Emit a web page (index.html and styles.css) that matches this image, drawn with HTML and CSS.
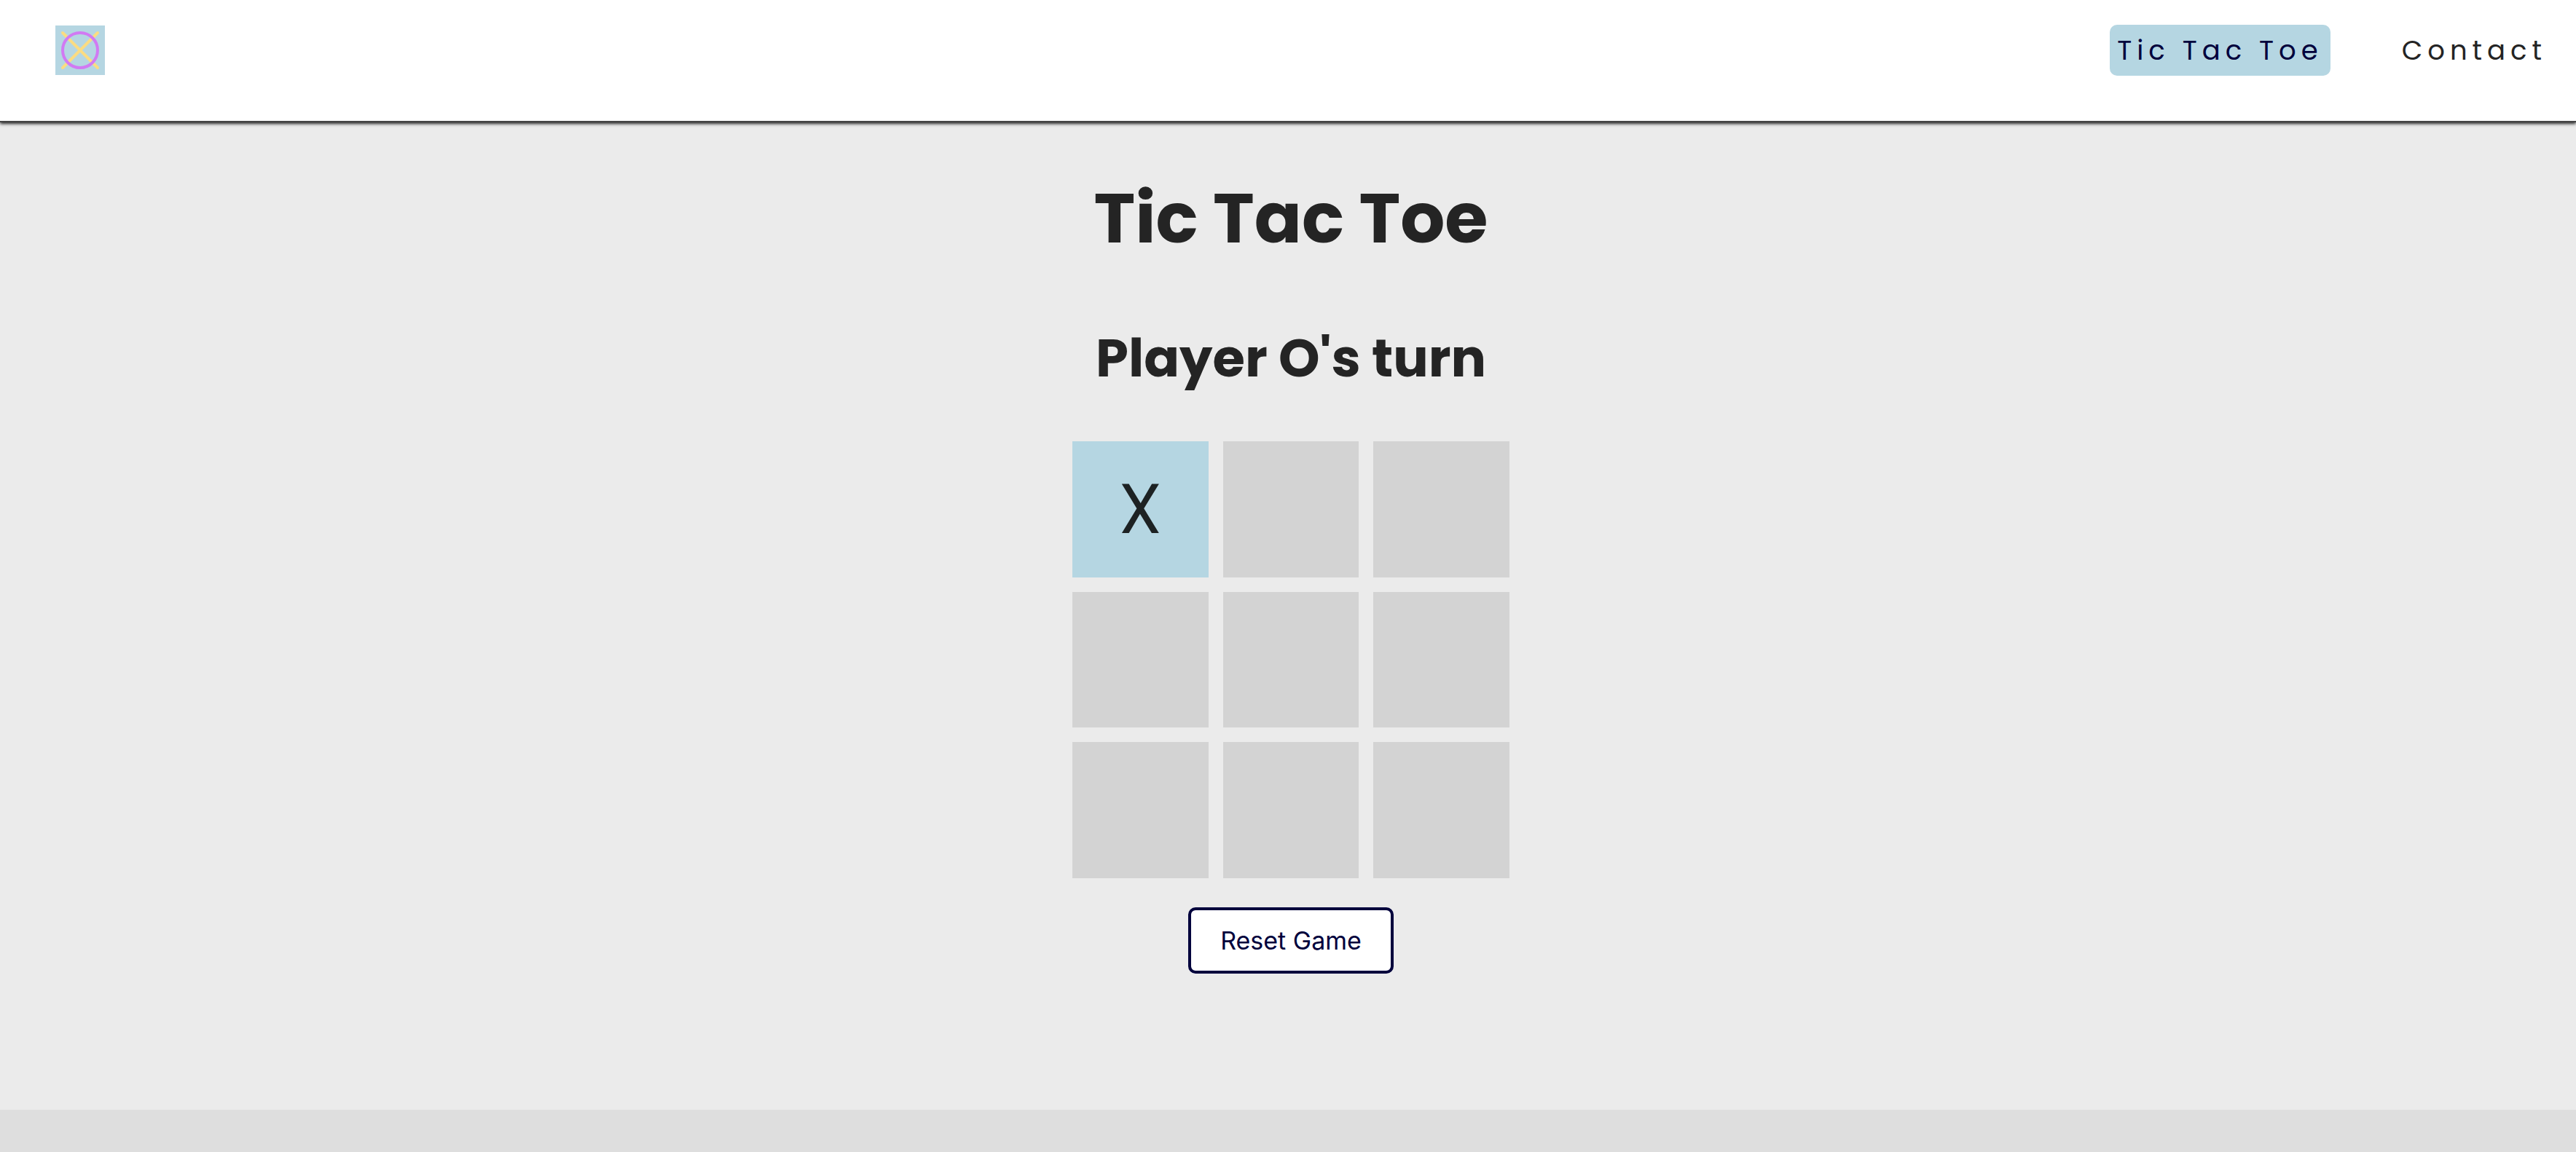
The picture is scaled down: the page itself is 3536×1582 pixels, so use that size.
FILE: index.html
```html
<!DOCTYPE html>
<html lang="en">
<head>
  <meta charset="utf-8">
  <meta name="viewport" content="width=device-width, initial-scale=1">
  <title>Tic Tac Toe</title>
  <link rel="stylesheet" href="styles.css">
</head>
<body>
  <header class="header">
    <a class="logo" href="#" aria-label="Home">
      <svg class="logo-mark" viewBox="0 0 68 68" aria-hidden="true">
        <rect width="68" height="68" fill="#b5d6e2"/>
        <path d="M10 10 58 58M58 10 10 58" stroke="#fbdc82" stroke-width="4" stroke-linecap="round"/>
        <circle cx="34" cy="34" r="24" fill="none" stroke="#d17af3" stroke-width="4"/>
      </svg>
    </a>
    <nav class="nav">
      <a class="nav-link nav-link-active" href="#" aria-current="page">Tic Tac Toe</a>
      <a class="nav-link" href="#">Contact</a>
    </nav>
  </header>
  <main class="game">
    <h1 class="title">Tic Tac Toe</h1>
    <h2 class="status">Player O's turn</h2>
    <div class="board">
      <button class="cell cell-taken" type="button" aria-label="Square 1, X">X</button>
      <button class="cell" type="button" aria-label="Square 2"></button>
      <button class="cell" type="button" aria-label="Square 3"></button>
      <button class="cell" type="button" aria-label="Square 4"></button>
      <button class="cell" type="button" aria-label="Square 5"></button>
      <button class="cell" type="button" aria-label="Square 6"></button>
      <button class="cell" type="button" aria-label="Square 7"></button>
      <button class="cell" type="button" aria-label="Square 8"></button>
      <button class="cell" type="button" aria-label="Square 9"></button>
    </div>
    <button class="reset" type="button">Reset Game</button>
  </main>
  <footer class="footer"></footer>
</body>
</html>
```
FILE: styles.css
```css
* {
  box-sizing: border-box;
}

body {
  display: flex;
  flex-direction: column;
  min-height: 100vh;
  margin: 0;
  background: #ebebeb;
  color: #242424;
  font-family: Poppins, Inter, "Open Sans", sans-serif;
}

.header {
  display: flex;
  align-items: center;
  justify-content: space-between;
  padding: 34px 30px 62px 76px;
  background: #fff;
  border-bottom: 2px solid #444;
  box-shadow: 0 2px 4px #242424;
}

.logo-mark {
  display: block;
  width: 68px;
  height: 68px;
}

.nav {
  display: flex;
  gap: 88px;
}

.nav-link {
  padding: 0 10px;
  border-radius: 10px;
  color: #242424;
  font-size: 37px;
  line-height: 70px;
  letter-spacing: 7px;
  text-decoration: none;
}

.nav-link-active {
  background: #b5d6e2;
  color: #00003c;
}

.game {
  display: flex;
  flex: 1;
  flex-direction: column;
  align-items: center;
  padding: 72px 0 80px 8px;
}

.title,
.status {
  margin: 0;
  font-weight: 700;
  line-height: 120px;
}

.title {
  font-size: 96px;
}

.status {
  margin-top: 72px;
  font-size: 72px;
}

.board {
  display: grid;
  grid-template-columns: repeat(3, 1fr);
  gap: 20px;
  width: 600px;
  max-width: 100%;
  margin: 54px 0 40px;
}

.cell {
  aspect-ratio: 1;
  padding: 0;
  border: 0;
  background: #d3d3d3;
  color: #1d2223;
  font-family: inherit;
  font-size: 96px;
  line-height: 1;
}

.cell-taken {
  background: #b5d6e2;
}

.reset {
  padding: 20px 40px;
  border: 4px solid #00003c;
  border-radius: 10px;
  background: #fff;
  color: #00003c;
  font-family: Inter, sans-serif;
  font-size: 34px;
  line-height: 43px;
}

.footer {
  height: 58px;
  background: #dedede;
}
```
